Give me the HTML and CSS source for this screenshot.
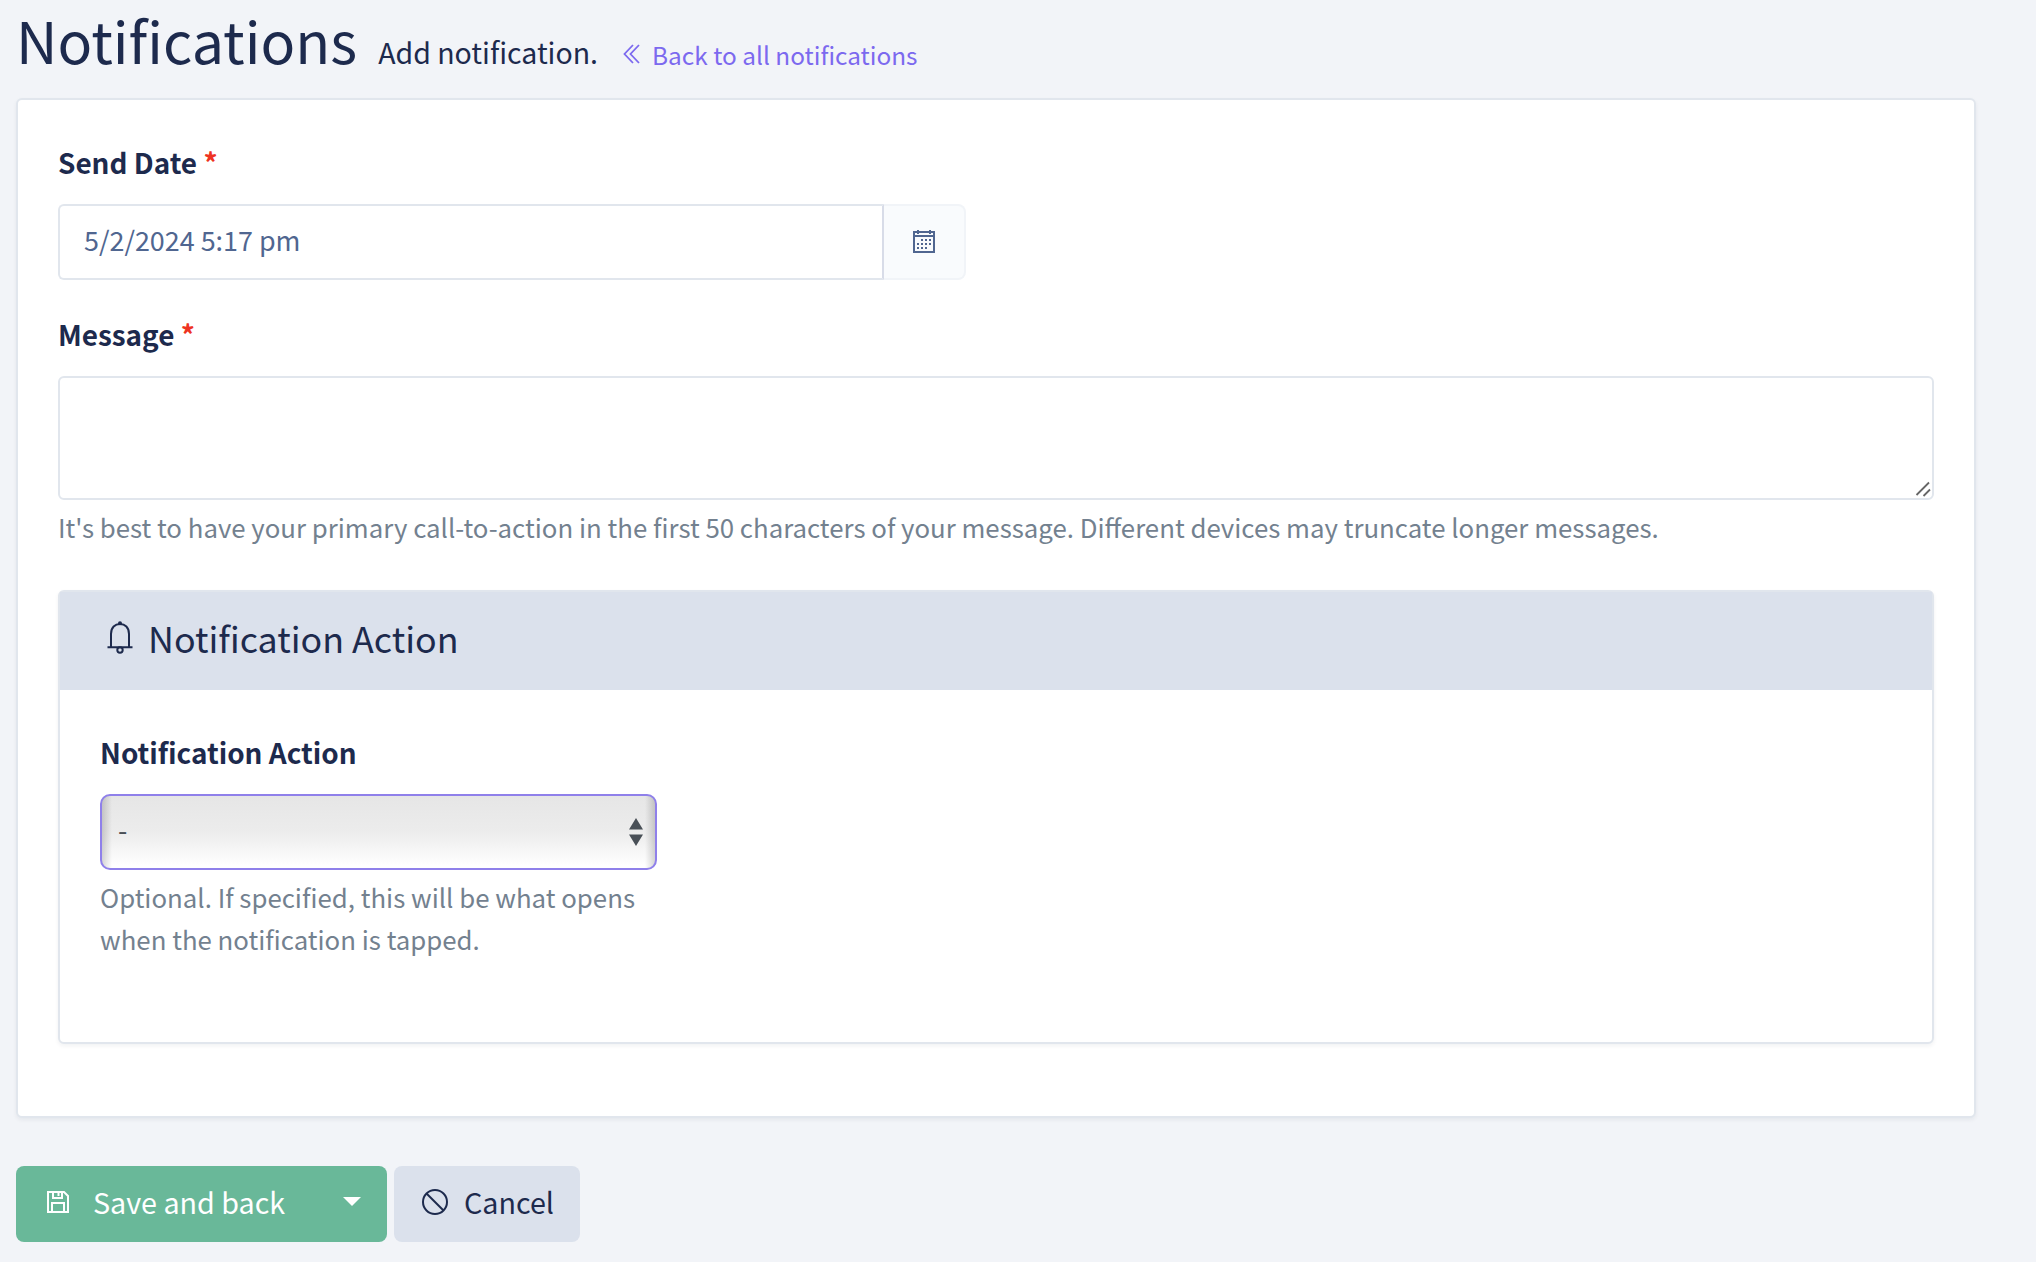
FILE: index.html
```
<!DOCTYPE html>
<html lang="en">
<head>
  <title>Notifications</title>
  <meta charset="UTF-8">
  <link rel="stylesheet" href="styles.css">
</head>
<body>
  <header class="page-header">
    <h1>Notifications</h1>
    <span class="subheading">Add notification.</span>
    <a href="#" class="back">
      <svg class="icon-back" width="18" height="20" viewBox="0 0 18 20"><path d="M10 1L1.500 10L10 19M16 1L7.500 10L16 19"/></svg>
      <span>Back to all notifications</span>
    </a>
  </header>

  <form>
    <div class="card main-card">
      <label class="label" for="date">Send Date <span class="required">*</span></label>
      <div class="input-group">
        <input type="text" class="control" id="date" value="5/2/2024 5:17 pm">
        <span class="addon">
          <svg width="22" height="24" viewBox="0 0 22 24" shape-rendering="crispEdges">
            <path d="M0 1h22v22H0zM2 3v2h18V3zM2 7v14h18V7z" fill-rule="evenodd"/>
            <path d="M4 0h2v4H4zM16 0h2v4h-2zM8 9h2v2H8zM12 9h2v2h-2zM16 9h2v2h-2zM4 13h2v2H4zM8 13h2v2H8zM12 13h2v2h-2zM16 13h2v2h-2zM4 17h2v2H4zM8 17h2v2H8zM12 17h2v2h-2z"/>
          </svg>
        </span>
      </div>

      <label class="label" for="message">Message <span class="required">*</span></label>
      <div class="message">
        <textarea class="control" id="message"></textarea>
        <svg class="grip" width="16" height="16" viewBox="0 0 16 16"><path d="M1.500 14L14 1.500M8.500 15L15 8.500"/></svg>
      </div>
      <p class="hint">It's best to have your primary call-to-action in the first 50 characters of your message. Different devices may truncate longer messages.</p>

      <div class="card action-card">
        <h2 class="card-header">
          <svg width="26" height="34" viewBox="0 0 26 34"><path d="M4 27V14C4 7.500 8 4 13 4S22 7.500 22 14V27M.5 27.200H25.500"/><circle cx="13" cy="30" r="2.700"/><circle class="dot" cx="13" cy="3.200" r="2"/></svg>
          <span>Notification Action</span>
        </h2>
        <div class="card-body">
          <label class="label" for="action">Notification Action</label>
          <div class="select">
            <select id="action"><option>-</option></select>
            <svg class="arrows" width="14" height="28" viewBox="0 0 14 28"><path d="M7 0L14 11.500H0zM7 28L14 16.500H0z"/></svg>
          </div>
          <p class="hint">Optional. If specified, this will be what opens when the notification is tapped.</p>
        </div>
      </div>
    </div>

    <div class="buttons">
      <button type="button" class="btn btn-save">
        <svg width="22" height="22" viewBox="0 0 22 22"><path d="M1 1H17L21 5V21H1zM6 1V7H15V1M11.500 2V5M5 21V12H17V21"/></svg>
        <span>Save and back</span>
        <i class="caret"></i>
      </button>
      <button type="button" class="btn btn-cancel">
        <svg width="26" height="26" viewBox="0 0 26 26"><circle cx="13" cy="13" r="12"/><path d="M4.500 4.500L21.500 21.500"/></svg>
        <span>Cancel</span>
      </button>
    </div>
  </form>
</body>
</html>
```
FILE: styles.css
```
* {
  box-sizing: border-box;
}

body {
  margin: 0;
  padding: 0 60px 0 16px;
  background: #f2f4f8;
  color: #1d2a4d;
  font-family: "Noto Sans CJK SC", "Noto Sans", sans-serif;
}

svg {
  display: block;
  flex: none;
}

.page-header {
  display: flex;
  align-items: baseline;
  height: 98px;
}

h1 {
  margin: 0;
  font-size: 57.400px;
  font-weight: 400;
  line-height: 78px;
}

.subheading {
  margin-left: 21px;
  font-size: 28.500px;
}

.back {
  display: flex;
  align-items: center;
  margin-left: 25px;
  gap: 11px;
  color: #7c69ef;
  font-size: 24.400px;
  text-decoration: none;
}

.icon-back {
  fill: none;
  stroke: #7c69ef;
  stroke-width: 1.800;
}

.card {
  border: 2px solid #e1e6ed;
  border-radius: 6px;
  background: white;
  box-shadow: 0 2px 4px rgba(22, 28, 45, 0.06);
}

.main-card {
  height: 1020px;
  padding: 40px 40px 0;
}

.label {
  display: block;
  height: 64px;
  font-size: 27.900px;
  font-weight: 600;
  line-height: 44px;
}

.required {
  color: #ee3322;
}

.control {
  border: 2px solid #e1e6ed;
  border-radius: 6px;
  background: white;
  color: #506690;
  font-family: inherit;
  font-size: 26.900px;
}

.input-group {
  display: flex;
  width: 908px;
  height: 76px;
  margin-bottom: 32px;
}

.input-group .control {
  width: 826px;
  padding: 0 24px 5px;
  border-right-color: #d8dce8;
  border-radius: 6px 0 0 6px;
}

.addon {
  display: flex;
  align-items: center;
  justify-content: center;
  width: 82px;
  border: 2px solid #f1f4f8;
  border-left: 0;
  border-radius: 0 8px 8px 0;
  background: #f9fbfd;
  fill: #506690;
}

.message {
  position: relative;
  height: 124px;
}

.message .control {
  display: block;
  width: 100%;
  height: 124px;
  padding: 16px 24px;
  resize: none;
}

.grip {
  position: absolute;
  right: 3px;
  bottom: 3px;
  fill: none;
  stroke: #666;
  stroke-width: 1.800;
}

.hint {
  margin: 6px 0 0;
  color: #73818f;
  font-size: 25.800px;
  line-height: 42px;
}

.action-card {
  height: 454px;
  margin-top: 42px;
}

.card-header {
  display: flex;
  align-items: center;
  height: 98px;
  margin: 0;
  padding: 0 47px 9px;
  gap: 15px;
  background: #dbe1ec;
  font-size: 35.800px;
  font-weight: 400;
}

.card-header svg {
  fill: none;
  stroke: #1d2a4d;
  stroke-width: 2;
}

.card-header .dot {
  fill: #1d2a4d;
  stroke: none;
}

.card-body {
  width: 640px;
  padding: 40px;
}

.select {
  position: relative;
  width: 557px;
  height: 76px;
}

select {
  display: block;
  width: 100%;
  height: 100%;
  padding: 0 16px 5px;
  border: 2px solid #8f80ea;
  border-radius: 10px;
  appearance: none;
  background: linear-gradient(to right, rgba(0, 0, 0, 0.16), transparent 10px, transparent calc(100% - 10px), rgba(0, 0, 0, 0.16)), linear-gradient(#e6e6e6, #ececec 50%, white 97%);
  color: #4a5056;
  font-family: inherit;
  font-size: 26.900px;
}

.arrows {
  position: absolute;
  top: 24px;
  right: 14px;
  fill: #495057;
}

.buttons {
  display: flex;
  gap: 7px;
  margin-top: 48px;
}

.btn {
  display: flex;
  align-items: center;
  height: 76px;
  border: 0;
  border-radius: 8px;
  font-family: inherit;
  font-size: 28.700px;
}

.btn svg {
  fill: none;
  stroke: currentColor;
  stroke-width: 2;
}

.btn-save {
  width: 371px;
  padding: 0 26px 5px 31px;
  gap: 24px;
  background: #69b899;
  color: white;
}

.caret {
  margin-left: auto;
  border: 9px solid transparent;
  border-top: 9px solid white;
  border-bottom: 0;
}

.btn-cancel {
  width: 186px;
  padding: 0 28px 5px;
  gap: 16px;
  background: #dbe1ec;
  color: #1d2a4d;
}
```
